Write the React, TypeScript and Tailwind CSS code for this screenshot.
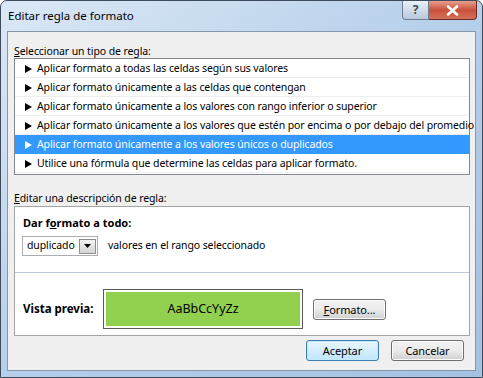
import React from 'react'

const rules = [
  'Aplicar formato a todas las celdas según sus valores',
  'Aplicar formato únicamente a las celdas que contengan',
  'Aplicar formato únicamente a los valores con rango inferior o superior',
  'Aplicar formato únicamente a los valores que estén por encima o por debajo del promedio',
  'Aplicar formato únicamente a los valores únicos o duplicados',
  'Utilice una fórmula que determine las celdas para aplicar formato.',
]

function Btn({ children, primary }: { children: React.ReactNode; primary?: boolean }) {
  return (
    <button
      className={
        'h-[21px] w-[73px] rounded-[3px] border text-[11px] leading-none text-black ' +
        (primary
          ? 'border-[#3c7fb1] bg-gradient-to-b from-[#eaf6fd] to-[#bee6fd] shadow-[inset_0_0_0_1px_#c5e8fb]'
          : 'border-[#707070] bg-gradient-to-b from-[#f2f2f2] via-[#ebebeb] to-[#cfcfcf] shadow-[inset_0_0_0_1px_#fcfcfc]')
      }
    >
      {children}
    </button>
  )
}

export default function App() {
  return (
    <div className="w-[483px] h-[378px] overflow-hidden bg-white font-['Noto_Sans',sans-serif]">
      <div className="w-[483px] h-[378px] flex flex-col rounded-t-[7px] border border-[#3e4b5c] bg-gradient-to-br from-[#dbe8f6] via-[#b6cfea] to-[#a3c1e2]">
        {/* title bar */}
        <div className="h-[30px] flex items-start shrink-0">
          <div className="pl-[7px] pt-[7px] text-[11.5px] leading-[16px] text-black">Editar regla de formato</div>
          <div className="ml-auto mr-[5px] flex">
            <div className="w-[27px] h-[19px] rounded-bl-[4px] border border-t-0 border-[#6f7f93] bg-gradient-to-b from-[#e9f0f7] to-[#b8c9dc] flex items-center justify-center text-[12px] font-bold text-[#404a56]">
              ?
            </div>
            <div className="w-[48px] h-[19px] rounded-br-[4px] border border-t-0 border-l-0 border-[#6b2a22] bg-gradient-to-b from-[#e7a08e] via-[#c9503b] to-[#d6705a] flex items-center justify-center">
              <svg width="13" height="11" viewBox="0 0 13 11">
                <path d="M2 1.5 L11 9.5 M11 1.5 L2 9.5" stroke="#ffffff" strokeWidth="2.6" strokeLinecap="round" />
              </svg>
            </div>
          </div>
        </div>

        {/* content */}
        <div className="mx-[6px] h-[340px] border border-[#8797ab] bg-[#f0f0f0] px-[6px] pt-[12px] flex flex-col text-[10.5px] tracking-[-0.1px] text-black">
          <div className="leading-[14px]">
            <span className="underline">S</span>eleccionar un tipo de regla:
          </div>
          <div className="border border-[#828790] bg-white pb-[1px] mr-[-1px]">
            {rules.map((r, i) => (
              <div
                key={i}
                className={
                  'h-[19px] flex items-center pl-[10px] pt-[1px] border-b whitespace-nowrap ' +
                  (i === 4 ? 'bg-[#3399ff] text-white border-[#3399ff]' : 'border-[#ededed]')
                }
              >
                <svg width="12" height="8" viewBox="0 0 12 8" className="shrink-0">
                  <path d="M0 0 L7 4 L0 8 Z" fill={i === 4 ? '#ffffff' : '#000000'} />
                </svg>
                <span>{r}</span>
              </div>
            ))}
          </div>

          <div className="mt-[16px] mb-[1px] leading-[14px]">
            <span className="underline">E</span>ditar una descripción de regla:
          </div>
          <div className="h-[130px] border border-[#a3a3a3] bg-white flex flex-col mr-[-1px]">
            <div className="pl-[8px] pt-[9px] leading-[14px] font-bold text-[11px] tracking-normal">
              Dar f<span className="underline">o</span>rmato a todo:
            </div>
            <div className="pl-[7px] mt-[6px] flex items-center">
              <div className="w-[76px] h-[20px] border border-[#abadb3] flex items-center pl-[4px] pr-[1px]">
                <span>duplicado</span>
                <div className="ml-auto w-[17px] h-[15px] border border-[#8e8f8f] bg-gradient-to-b from-[#f2f2f2] to-[#d5d5d5] flex items-center justify-center">
                  <svg width="7" height="4" viewBox="0 0 7 4">
                    <path d="M0 0 H7 L3.5 4 Z" fill="#000" />
                  </svg>
                </div>
              </div>
              <span className="ml-[10px]">valores en el rango seleccionado</span>
            </div>
            <div className="mt-[16px] h-px bg-[#bccada]" />
            <div className="mt-[16px] pl-[8px] flex items-center">
              <div className="w-[80px] font-bold text-[11.5px] tracking-normal">Vista previa:</div>
              <div className="w-[200px] h-[40px] border border-[#5a5a5a] p-[2px] bg-white">
                <div className="w-full h-full bg-[#92d050] flex items-center justify-center text-[12.5px] tracking-normal">AaBbCcYyZz</div>
              </div>
              <div className="ml-[10px]">
                <Btn>
                  <span className="underline">F</span>ormato...
                </Btn>
              </div>
            </div>
          </div>

          <div className="mt-[4px] flex justify-end gap-[12px] pr-[5px]">
            <Btn primary>Aceptar</Btn>
            <Btn>Cancelar</Btn>
          </div>
        </div>
      </div>
    </div>
  )
}
